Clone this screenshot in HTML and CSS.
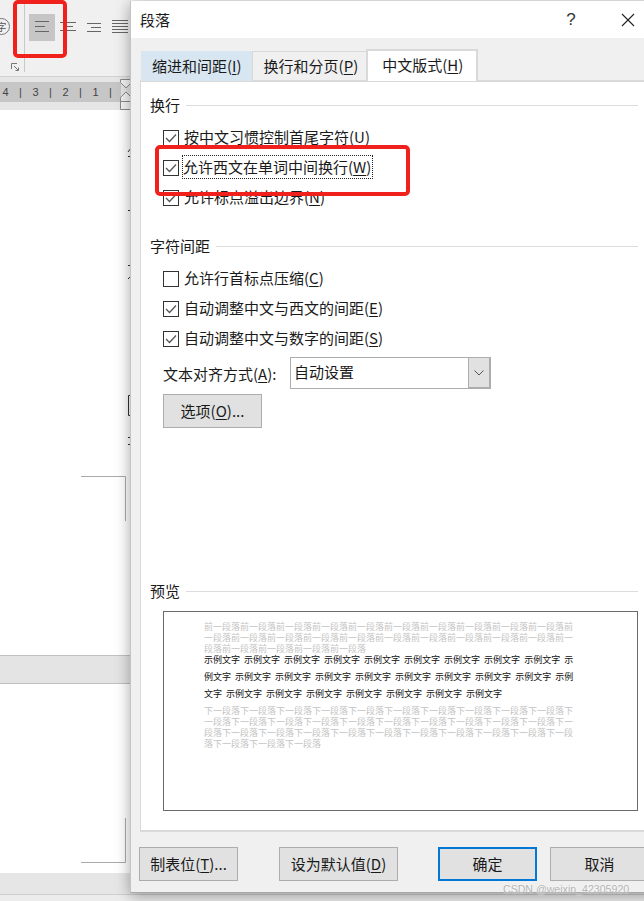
FILE: index.html
```html
<!DOCTYPE html>
<html>
<head>
  <title>段落</title>
  <link rel="stylesheet" href="styles.css">
</head>
<body>

<div class="word">
  <div class="ribbon">
    <div class="ribbon-group">
      <span class="circle-char">字</span>
      <svg class="launcher" width="8" height="8" viewBox="0 0 8 8"><path d="M0.5 6V0.5H6M3 3L7 7M4.5 7.5H7.5V4.5" fill="none" stroke="#777"/></svg>
    </div>
    <div class="align-btn selected">
      <svg width="26" height="27" viewBox="0 0 26 27"><path d="M6 7.5H20M6 12.5H16M6 17.5H20" stroke="#666"/></svg>
    </div>
    <div class="align-btn">
      <svg width="26" height="27" viewBox="0 0 26 27"><path d="M5 8.5H21M8 12.5H18M5 16.5H21" stroke="#666"/></svg>
    </div>
    <div class="align-btn">
      <svg width="26" height="27" viewBox="0 0 26 27"><path d="M6 9.5H20M10 13.5H20M6 17.5H20" stroke="#666"/></svg>
    </div>
    <div class="align-btn">
      <svg width="26" height="27" viewBox="0 0 26 27"><path d="M5 6.5H21M5 9.5H21M5 12.5H21M5 15.5H21M5 18.5H21" stroke="#666"/></svg>
    </div>
  </div>

  <div class="ruler">
    <div class="ruler-band">
      <span>4</span><span>|</span><span>3</span><span>|</span><span>2</span><span>|</span><span>1</span><span>|</span>
    </div>
    <svg class="ruler-marker" width="12" height="33" viewBox="0 0 12 33"><path d="M0.5 2.5H11.5V5.5L6 11L0.5 5.5ZM6 15L11.5 20.5V32.5H0.5V20.5ZM0.5 24.5H11.5" fill="#f4f4f4" stroke="#8a8a8a"/></svg>
  </div>

  <div class="doc">
    <svg class="doc-marks" width="131" height="763" viewBox="0 0 131 763">
      <path d="M81 366.5H125.5V411M125.5 708V752.5H81" fill="none" stroke="#aaa"/>
      <path d="M128 42L131 38M128 46.5H131M130 89.5H131M128 100.5H131M128 155.5H131M128 169L131 166M131 285.5H128.5V305.5H131M128 327.5H131M128 334.5H131" fill="none" stroke="#333"/>
    </svg>
    <div class="doc-bar"></div>
  </div>

  <div class="status"></div>
</div>

<div class="dialog">
  <div class="titlebar">
    <span class="title">段落</span>
    <span class="help">?</span>
    <svg class="close" width="14" height="14" viewBox="0 0 14 14"><path d="M1 1L13 13M13 1L1 13" stroke="#222" stroke-width="1.1"/></svg>
  </div>

  <div class="tabs">
    <div class="tab tab-hover">缩进和间距(<u>I</u>)</div>
    <div class="tab">换行和分页(<u>P</u>)</div>
    <div class="tab tab-active">中文版式(<u>H</u>)</div>
  </div>

  <div class="panel">
    <div class="group-title"><span>换行</span></div>
    <div class="check-row">
      <svg class="check" width="16" height="16" viewBox="0 0 16 16"><rect x="0.5" y="0.5" width="15" height="15" fill="#fff" stroke="#333"/><path d="M3 8L6.5 11.5L13 4.5" fill="none" stroke="#555" stroke-width="1.3"/></svg>
      <span>按中文习惯控制首尾字符(<u>U</u>)</span>
    </div>
    <div class="check-row">
      <svg class="check" width="16" height="16" viewBox="0 0 16 16"><rect x="0.5" y="0.5" width="15" height="15" fill="#fff" stroke="#333"/><path d="M3 8L6.5 11.5L13 4.5" fill="none" stroke="#555" stroke-width="1.3"/></svg>
      <span class="focused">允许西文在单词中间换行(<u>W</u>)</span>
    </div>
    <div class="check-row">
      <svg class="check" width="16" height="16" viewBox="0 0 16 16"><rect x="0.5" y="0.5" width="15" height="15" fill="#fff" stroke="#333"/><path d="M3 8L6.5 11.5L13 4.5" fill="none" stroke="#555" stroke-width="1.3"/></svg>
      <span>允许标点溢出边界(<u>N</u>)</span>
    </div>

    <div class="group-title spaced"><span>字符间距</span></div>
    <div class="check-row">
      <svg class="check" width="16" height="16" viewBox="0 0 16 16"><rect x="0.5" y="0.5" width="15" height="15" fill="#fff" stroke="#333"/></svg>
      <span>允许行首标点压缩(<u>C</u>)</span>
    </div>
    <div class="check-row">
      <svg class="check" width="16" height="16" viewBox="0 0 16 16"><rect x="0.5" y="0.5" width="15" height="15" fill="#fff" stroke="#333"/><path d="M3 8L6.5 11.5L13 4.5" fill="none" stroke="#555" stroke-width="1.3"/></svg>
      <span>自动调整中文与西文的间距(<u>E</u>)</span>
    </div>
    <div class="check-row">
      <svg class="check" width="16" height="16" viewBox="0 0 16 16"><rect x="0.5" y="0.5" width="15" height="15" fill="#fff" stroke="#333"/><path d="M3 8L6.5 11.5L13 4.5" fill="none" stroke="#555" stroke-width="1.3"/></svg>
      <span>自动调整中文与数字的间距(<u>S</u>)</span>
    </div>

    <div class="select-row">
      <span class="select-label">文本对齐方式(<u>A</u>):</span>
      <div class="select">
        <span class="select-value">自动设置</span>
        <span class="select-arrow">
          <svg width="10" height="6" viewBox="0 0 10 6"><path d="M0.5 0.5L5 5L9.5 0.5" fill="none" stroke="#555"/></svg>
        </span>
      </div>
    </div>
    <button class="btn options">选项(<u>O</u>)...</button>

    <div class="group-title preview-title"><span>预览</span></div>
    <div class="preview">
      <p class="prev-text" id="prevText"></p>
      <p class="sample-text" id="sampleText"></p>
      <p class="prev-text after" id="nextText"></p>
    </div>
  </div>

  <div class="footer">
    <button class="btn">制表位(<u>T</u>)...</button>
    <button class="btn default-btn">设为默认值(<u>D</u>)</button>
    <button class="btn ok">确定</button>
    <button class="btn cancel">取消</button>
  </div>
</div>

<!-- red marks added on top of the screenshot -->
<div class="mark mark-align"></div>
<div class="mark mark-option"></div>
<div class="watermark">CSDN @weixin_42305920</div>

<script>
  document.getElementById("prevText").textContent = "前一段落".repeat(25);
  document.getElementById("sampleText").textContent = "示例文字 ".repeat(26).trim();
  document.getElementById("nextText").textContent = "下一段落".repeat(34);
</script>

</body>
</html>
```

FILE: styles.css
```css
html, body {
  margin: 0;
  width: 644px;
  height: 901px;
  overflow: hidden;
}
body {
  position: relative;
  background: #ececec;
  font-family: "Noto Sans CJK SC", "Noto Sans", sans-serif;
  font-size: 15px;
  color: #1a1a1a;
}
u { text-underline-offset: 2px; }

/* word window behind the dialog */
.ribbon {
  display: flex;
  height: 76px;
  background: #f0f0f0;
  border-bottom: 1px solid #d2d2d2;
  box-sizing: content-box;
}
.ribbon-group {
  width: 24px;
  height: 72px;
  position: relative;
  border-right: 1px solid #c8c8c8;
  margin-right: 4px;
}
.circle-char {
  position: absolute;
  left: -7px;
  top: 18px;
  width: 15px;
  height: 15px;
  border: 1px solid #777;
  border-radius: 50%;
  font-size: 10px;
  line-height: 15px;
  text-align: center;
  color: #555;
}
.launcher {
  position: absolute;
  left: 11px;
  top: 63px;
}
.align-btn {
  width: 26px;
  height: 27px;
  margin-top: 14px;
}
.align-btn svg { display: block; }
.align-btn.selected { background: #c6c6c6; }

.ruler {
  position: relative;
  height: 33px;
  background: #e6e6e6;
}
.ruler-band {
  display: flex;
  position: relative;
  top: 5px;
  width: 121px;
  height: 20px;
  background: #c6c6c6;
  font-family: "Liberation Sans", sans-serif;
  font-size: 11px;
  line-height: 20px;
  color: #444;
}
.ruler-band span {
  width: 15px;
  text-align: center;
}
.ruler-band span:first-child { margin-left: -2px; }
.ruler-marker {
  position: absolute;
  left: 120px;
  top: 0;
}

.doc {
  position: relative;
  height: 763px;
  background: #fff;
}
.doc-marks {
  position: absolute;
  left: 0;
  top: 0;
}
.doc-bar {
  position: absolute;
  left: 0;
  top: 545px;
  width: 131px;
  height: 27px;
  background: #e4e4e4;
  border-top: 1px solid #c0c0c0;
  border-bottom: 1px solid #c0c0c0;
}
.status {
  height: 21px;
  background: #e6e6e6;
  border-bottom: 1px solid #cfcfcf;
}

/* paragraph dialog */
.dialog {
  position: absolute;
  left: 130px;
  top: 1px;
  width: 530px;
  height: 892px;
  box-sizing: border-box;
  background: #f0f0f0;
  border-left: 1px solid #c4c4c4;
  border-bottom: 1px solid #a8a8a8;
  box-shadow: 0 3px 14px rgba(0, 0, 0, 0.35);
}
.titlebar {
  display: flex;
  align-items: center;
  height: 37px;
  background: #fff;
  padding-left: 9px;
}
.title { flex: 1; }
.help {
  width: 20px;
  margin-right: 40px;
  font-family: "Liberation Sans", sans-serif;
  font-size: 17px;
  text-align: center;
  color: #333;
}
.close { margin-right: 25px; }

.tabs {
  display: flex;
  align-items: flex-end;
  height: 43px;
  padding-left: 10px;
  box-sizing: border-box;
  margin-bottom: -1px;
}
.tab {
  height: 29px;
  line-height: 27px;
  padding: 0 8px 0 11px;
  border: 1px solid #d9d9d9;
  border-bottom: 0;
  margin-left: -1px;
  white-space: nowrap;
}
.tab-hover {
  padding: 0 10px;
  background: #d8e6f2;
  border-color: #d8e6f2;
  margin-left: 0;
}
.tab-active {
  position: relative;
  z-index: 1;
  height: 30px;
  line-height: 28px;
  padding: 0 13px 0 14px;
  background: #fff;
  border-width: 2px 2px 0 2px;
}

.panel {
  margin-left: 9px;
  background: #fff;
  border-top: 2px solid #d9d9d9;
  border-left: 1px solid #d9d9d9;
  border-bottom: 2px solid #d9d9d9;
  padding: 13px 0 20px 22px;
  height: 752px;
  box-sizing: border-box;
}
.group-title {
  display: flex;
  align-items: center;
  height: 20px;
  margin-left: -13px;
  width: 488px;
  gap: 6px;
}
.group-title span { margin-bottom: 2px; }
.group-title::after {
  content: "";
  flex: 1;
  border-top: 1px solid #dcdcdc;
}
.group-title.spaced { margin-top: 23px; margin-bottom: 8px; }
.group-title + .check-row { margin-top: 8px; }
.group-title.spaced + .check-row { margin-top: 0; }
.preview-title { margin-top: 153px; }

.check-row {
  display: flex;
  align-items: center;
  height: 30px;
  white-space: nowrap;
}
.check-row span {
  line-height: 22px;
  margin-bottom: 2px;
}
.check { margin-right: 5px; flex: none; }
.focused {
  outline: 1px dotted #222;
  padding: 0 1px 0 0;
  margin-left: -1px;
}

.select-row {
  display: flex;
  align-items: center;
  height: 32px;
  margin-top: 3px;
}
.select-label { width: 127px; white-space: nowrap; }
.select {
  display: flex;
  width: 201px;
  height: 32px;
  box-sizing: border-box;
  border: 1px solid #adadad;
  background: #fff;
}
.select-value {
  flex: 1;
  padding-left: 3px;
  line-height: 28px;
}
.select-arrow {
  display: flex;
  align-items: center;
  justify-content: center;
  width: 20px;
  background: #e1e1e1;
  border-left: 1px solid #adadad;
  border-right: 1px solid #adadad;
  border-bottom: 1px solid #adadad;
}

.btn {
  width: 99px;
  height: 34px;
  padding: 0 0 2px;
  background: #e1e1e1;
  border: 1px solid #adadad;
  font-family: inherit;
  font-size: 15px;
  color: #1a1a1a;
  white-space: nowrap;
}
.options { display: block; margin-top: 5px; }

.preview {
  width: 475px;
  height: 200px;
  box-sizing: border-box;
  margin-top: 10px;
  padding: 9px 0 0 40px;
  border: 1px solid #6a6a6a;
  background: #fff;
}
.preview p {
  margin: 0;
  width: 370px;
  font-size: 9px;
  word-break: break-all;
}
.prev-text {
  line-height: 11px;
  color: #c4c4c4;
}
.preview .prev-text.after { margin-top: 3px; }
.preview .sample-text {
  line-height: 17px;
  margin-top: -3px;
  word-spacing: 2px;
  color: #111;
}

.footer {
  display: flex;
  padding: 15px 0 0 8px;
}
.default-btn { width: 119px; margin-left: 41px; }
.ok {
  margin-left: 40px;
  border: 2px solid #0078d7;
}
.cancel { margin-left: 13px; }

/* annotations */
.mark {
  position: absolute;
  box-sizing: border-box;
  border: 4px solid #f0201c;
  border-radius: 5px;
}
.mark-align {
  left: 13px;
  top: 0;
  width: 54px;
  height: 58px;
}
.mark-option {
  left: 155px;
  top: 145px;
  width: 255px;
  height: 51px;
}
.watermark {
  position: absolute;
  left: 503px;
  top: 882px;
  font-family: "Liberation Sans", sans-serif;
  font-size: 10.6px;
  line-height: 14px;
  white-space: nowrap;
  color: #b4b4b4;
  text-shadow: 0 0 2px #fff;
}
```
